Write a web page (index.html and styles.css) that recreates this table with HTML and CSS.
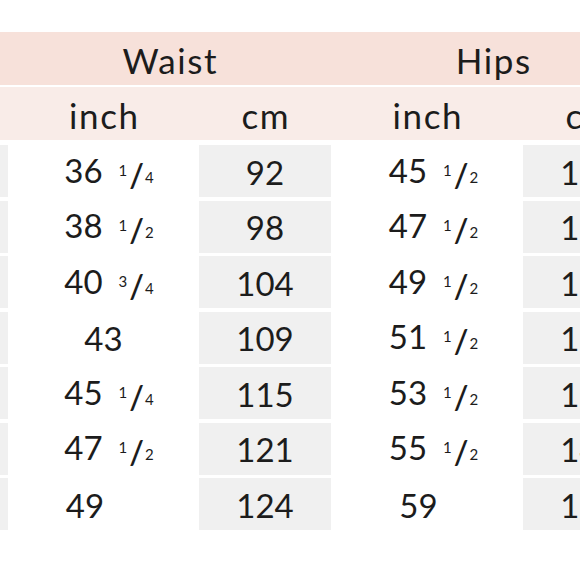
FILE: index.html
```html
<!DOCTYPE html>
<html>
<head>
<meta charset="utf-8">
<link rel="stylesheet" href="styles.css">
</head>
<body>
<div class="sheet">
  <div class="row head1">
    <div class="cell"></div>
    <div class="cell span2 label">Waist</div>
    <div class="cell span2 label">Hips</div>
  </div>
  <div class="row head2">
    <div class="cell"></div>
    <div class="cell label">inch</div>
    <div class="cell label">cm</div>
    <div class="cell label">inch</div>
    <div class="cell label">cm</div>
  </div>
  <div class="body">
    <div class="row data">
      <div class="cell cm"></div>
      <div class="cell inch wfrac"><span>36<span class="frac"><span class="num">1</span><span class="sl">/</span><span class="den">4</span></span></span></div>
      <div class="cell cm">92</div>
      <div class="cell inch hfrac"><span>45<span class="frac"><span class="num">1</span><span class="sl">/</span><span class="den">2</span></span></span></div>
      <div class="cell cm">116</div>
    </div>
    <div class="row data">
      <div class="cell cm"></div>
      <div class="cell inch wfrac"><span>38<span class="frac"><span class="num">1</span><span class="sl">/</span><span class="den">2</span></span></span></div>
      <div class="cell cm">98</div>
      <div class="cell inch hfrac"><span>47<span class="frac"><span class="num">1</span><span class="sl">/</span><span class="den">2</span></span></span></div>
      <div class="cell cm">121</div>
    </div>
    <div class="row data">
      <div class="cell cm"></div>
      <div class="cell inch wfrac"><span>40<span class="frac"><span class="num">3</span><span class="sl">/</span><span class="den">4</span></span></span></div>
      <div class="cell cm">104</div>
      <div class="cell inch hfrac"><span>49<span class="frac"><span class="num">1</span><span class="sl">/</span><span class="den">2</span></span></span></div>
      <div class="cell cm">126</div>
    </div>
    <div class="row data">
      <div class="cell cm"></div>
      <div class="cell inch">43</div>
      <div class="cell cm">109</div>
      <div class="cell inch hfrac"><span>51<span class="frac"><span class="num">1</span><span class="sl">/</span><span class="den">2</span></span></span></div>
      <div class="cell cm">131</div>
    </div>
    <div class="row data">
      <div class="cell cm"></div>
      <div class="cell inch wfrac"><span>45<span class="frac"><span class="num">1</span><span class="sl">/</span><span class="den">4</span></span></span></div>
      <div class="cell cm">115</div>
      <div class="cell inch hfrac"><span>53<span class="frac"><span class="num">1</span><span class="sl">/</span><span class="den">2</span></span></span></div>
      <div class="cell cm">136</div>
    </div>
    <div class="row data">
      <div class="cell cm"></div>
      <div class="cell inch wfrac"><span>47<span class="frac"><span class="num">1</span><span class="sl">/</span><span class="den">2</span></span></span></div>
      <div class="cell cm">121</div>
      <div class="cell inch hfrac"><span>55<span class="frac"><span class="num">1</span><span class="sl">/</span><span class="den">2</span></span></span></div>
      <div class="cell cm">141</div>
    </div>
    <div class="row data">
      <div class="cell cm"></div>
      <div class="cell inch left49">49</div>
      <div class="cell cm">124</div>
      <div class="cell inch left59">59</div>
      <div class="cell cm">150</div>
    </div>
  </div>
</div>
</body>
</html>
```

FILE: styles.css
```css
html, body {
  margin: 0;
  padding: 0;
  background: #ffffff;
  overflow: hidden;
}
body {
  width: 580px;
  height: 578px;
  font-family: Lato, "Open Sans", sans-serif;
  font-size: 33px;
  color: #1c1c1c;
}
.sheet {
  padding-top: 32px;
}
.row {
  display: grid;
  grid-template-columns: 8px 191px 132px 192px 132px;
  width: 580px;
}
.cell {
  display: flex;
  align-items: center;
  justify-content: center;
  white-space: nowrap;
}
.span2 {
  grid-column: span 2;
}
.label {
  font-size: 35px;
  letter-spacing: 1.6px;
  padding-left: 1.6px;
}
.head1 {
  height: 53px;
  background: #f7e1da;
}
.head1 .cell {
  padding-top: 2px;
}
.head2 {
  height: 53px;
  margin-top: 2px;
  background: #f9ece8;
}
.head2 .cell {
  padding-top: 2px;
}
.body {
  margin-top: 5px;
  display: flex;
  flex-direction: column;
  gap: 3.5px;
}
.data {
  height: 52px;
}
.data .cell {
  padding-top: 1px;
}
.cm {
  background: #f0f0f0;
}
.inch {
  background: #ffffff;
}
.frac {
  margin-left: 16px;
}
.num {
  font-size: 15px;
  vertical-align: 7px;
}
.sl {
  font-size: 32px;
  vertical-align: -4px;
  margin: 0 1px 0 2px;
  font-weight: 600;
}
.den {
  font-size: 15px;
}
.wfrac {
  padding-left: 11px;
}
.hfrac {
  padding-left: 13px;
}
.left49 {
  padding-right: 37px;
}
.left59 {
  padding-right: 17px;
}
```
